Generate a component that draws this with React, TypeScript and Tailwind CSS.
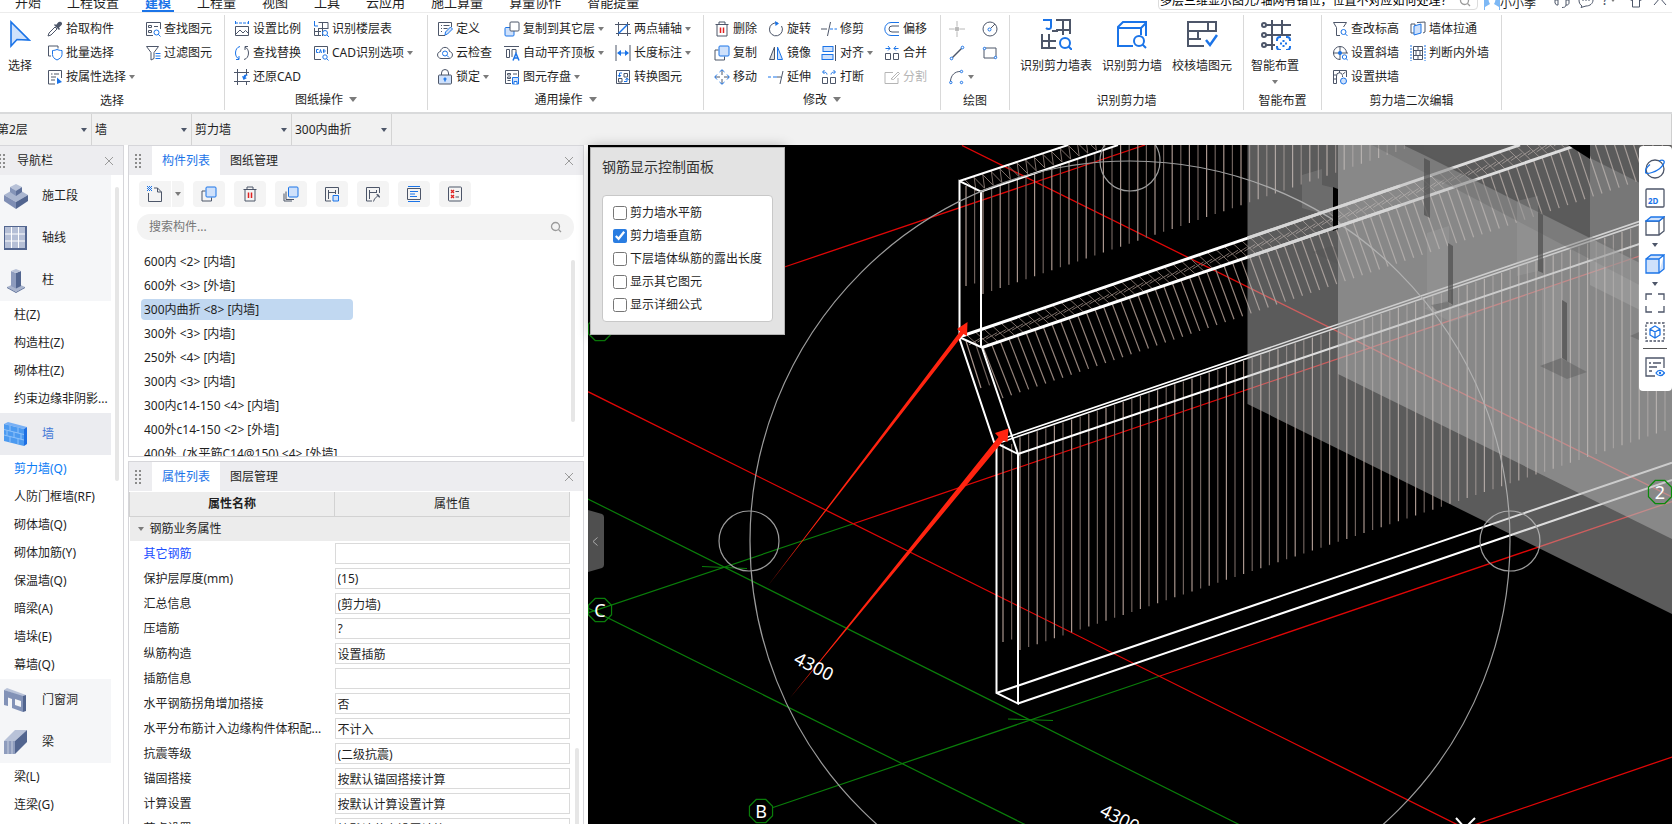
import React, { useState } from "react";

const D = "#4d5669";
const B = "#1b74e8";
const F = "#cfe1fb";

/* ------------------------------------------------------------------ icons */

const art: Record<string, React.ReactNode> = {
  picker: (
    <g>
      <path d="M1 15l1-3 6-6 2 2-6 6z" stroke={D} fill="none" />
      <path d="M7 4l5 5 1-1-1-1.500 2.500-2.500c1-1 .5-2.500-.5-3s-2-.5-2.700.2L9 4 8 3z" fill={D} />
    </g>
  ),
  batch: (
    <g fill="none">
      <path d="M4 11H1.500v-10H11v2.500" stroke={D} />
      <path d="M5.500 5.500c2 0 3-.5 4.500-1 1.500.5 2.500 1 5 1v4c0 2.500-2 4-5 5.500-3-1.500-4.500-3-4.500-5.500z" stroke={B} fill="#fff" />
    </g>
  ),
  attr: (
    <g fill="none">
      <path d="M8 15H1.500V1.500h13V9M4 5h1.500M7 5h5M4 8h5M4 11h4" stroke={D} />
      <path d="M10 8.500v6.500l5-2z" fill={B} />
    </g>
  ),
  find: (
    <g fill="none">
      <path d="M8 14.500H1.500v-13h14V8M3.500 4.500h3v2h-3zM3.500 9.500h3v2h-3zM9 5.500h4" stroke={D} />
      <circle cx="11.500" cy="11.500" r="2.500" stroke={B} />
      <path d="M13.300 13.300L15.500 15.500" stroke={B} />
    </g>
  ),
  filter: (
    <g fill="none">
      <path d="M1.500 1.500h12L9 7.500v6l-3 1.500V7.500z" stroke={D} />
      <path d="M10.500 8.500h5M10.500 11h5M10.500 13.500h5" stroke={B} />
    </g>
  ),
  scale: (
    <g fill="none">
      <path d="M1 2h14M1.500 0v4M14.500 0v4" stroke={B} strokeDasharray="3 1" />
      <path d="M1.500 5.500h13v9h-13zM2 13l4-4 3 3 2.500-2.500 3 3" stroke={D} />
    </g>
  ),
  replace: (
    <g fill="none">
      <path d="M6 1.500C3 2 1.500 5 1.500 8s1.500 5 3.500 6M5 11v3.500H2" stroke={B} />
      <path d="M10 14.500c3-.5 4.500-3.500 4.500-6.500S13 3 11 2M11 5V1.500h3" stroke={D} />
    </g>
  ),
  restore: (
    <g fill="none">
      <path d="M3.500 0v16M0 3.500h15M12.500 0v6M0 12.500h16M12.500 13v3" stroke={D} />
      <path d="M14 6c-3-1-4 0-4.500 1.500L8 7l1.500 4L13 9l-1.500-.5C11.800 7.500 12.500 6.500 14 6z" fill={B} />
    </g>
  ),
  floor: (
    <g fill="none">
      <path d="M1.500 0v5H5" stroke={B} />
      <path d="M5.500 1.500h9.500V8M9.500 1.500V15M1.500 7v7.500H8M1.500 10.500H8M5.500 7.500H15M5.500 7v8" stroke={D} />
      <circle cx="12" cy="12" r="2.500" stroke={B} fill="#fff" />
      <path d="M14 14l2 2" stroke={B} />
    </g>
  ),
  cad: (
    <g fill="none">
      <path d="M8 14.500H1.500v-13h13V9" stroke={D} />
      <path d="M5.500 4.500h-2v3h2M6.500 8l1-3.500 1 3.500M10.500 4.500v3c2 0 2-3 0-3" stroke={B} />
      <circle cx="12" cy="12" r="2.200" stroke={B} fill="#fff" />
      <path d="M13.500 13.500l2 2" stroke={B} />
    </g>
  ),
  define: (
    <g fill="none">
      <path d="M8 14.500H1.500v-13h13V6M4 4.500h1M6.500 4.500h6M4 7.500h1M6.500 7.500h4M4 10.500h1" stroke={D} />
      <path d="M8 14l.5-3 5-5 2 2-5 5z" stroke={B} fill={F} />
    </g>
  ),
  cloud: (
    <g fill="none">
      <path d="M4 13.500C-.5 13-.5 7 3.500 6.500 4 1 12 1 12.500 6.500c4 .5 4 6.500-.5 7z" stroke={D} />
      <circle cx="8" cy="8.500" r="2.500" stroke={B} />
      <path d="M9.800 10.300L12 12.500" stroke={B} />
    </g>
  ),
  lock: (
    <g fill="none">
      <path d="M4.500 6V4a3.500 3.500 0 017 0v2" stroke={D} />
      <rect x="1.500" y="6" width="13" height="9" rx="1" stroke={D} fill={F} />
      <path d="M8 8.500v4M6.500 10h3" stroke={B} strokeWidth="1.500" />
    </g>
  ),
  copyTo: (
    <g fill="none">
      <rect x="1" y="6.500" width="9" height="8.500" rx="1" stroke={B} fill={F} />
      <rect x="6" y="1" width="9" height="9" rx="1" stroke={D} fill="#fff" />
    </g>
  ),
  flat: (
    <g fill="none">
      <path d="M0 1.500h15M2.500 4.500h3v8h-3zM8 12V4.500h4V8" stroke={D} />
      <path d="M9 15.500l3-7 3 7M10 13h4" stroke={B} strokeWidth="1.500" />
    </g>
  ),
  save: (
    <g fill="none">
      <path d="M7 14.500H1.500v-13h13V8M3.500 4.500h3v1.500h-3zM3.500 8h3v1.500h-3zM3.500 11.500h3M9 5h4" stroke={D} />
      <path d="M8.500 8.500h6v6.500h-6z" stroke={B} fill={F} />
      <path d="M10 15v-2.500h3V15" stroke={B} fill="#fff" />
    </g>
  ),
  twoPoint: (
    <g fill="none">
      <path d="M3.500 1v14M12.500 1v14M0 3.500h15M1 12.500h15" stroke={D} />
      <path d="M3.500 12.500l9-9" stroke={B} strokeWidth="1.500" />
    </g>
  ),
  length: (
    <g fill="none">
      <path d="M1 0v16M15 0v16" stroke={D} />
      <path d="M3 8h10" stroke={B} />
      <path d="M6 5L2 8l4 3zM10 5l4 3-4 3z" fill={B} />
    </g>
  ),
  convert: (
    <g fill="none">
      <path d="M1.500 1.500h13v13h-13zM9 4.500h3.500V8H9zM3.500 9.500H7v3.500H3.500z" stroke={D} />
      <path d="M7 4H4.500v3.500M9 12.500h3V9.500M3 6l1.500 2L6 6M10.500 11L12 9l1.500 2" stroke={B} />
    </g>
  ),
  trash: (
    <g fill="none">
      <path d="M1.500 3.500h13M5 3.500V1h6v2.500M3 3.500v11.500h10V3.500" stroke={D} />
      <path d="M6.500 6.500v5.500M9.500 6.500v5.500" stroke="#e02020" strokeWidth="1.500" />
    </g>
  ),
  copy: (
    <g fill="none">
      <path d="M4.500 5H1v10h9.500v-3.500" stroke={D} />
      <rect x="5" y="1" width="10" height="10" rx="1" stroke={B} fill={F} />
    </g>
  ),
  move: (
    <g fill="none" stroke={B}>
      <path d="M8 1v5M8 10v5M1 8h5M10 8h5" stroke={D} />
      <path d="M5.500 3L8 .7 10.500 3M5.500 13L8 15.300 10.500 13M3 5.500L.7 8 3 10.500M13 5.500L15.300 8 13 10.500" />
    </g>
  ),
  rotate: (
    <g fill="none">
      <path d="M10 2.200A6.500 6.500 0 1013.500 5" stroke={D} />
      <path d="M7 0l4 2.500L7.500 5z" fill={B} />
    </g>
  ),
  mirror: (
    <g fill="none">
      <path d="M6.500 2v12.500h-5z" stroke={D} fill="#ddd" />
      <path d="M9.500 2v12.500h5z" stroke={B} fill={F} />
    </g>
  ),
  extend: (
    <g fill="none">
      <path d="M0 8h3M5 8h4" stroke={B} />
      <path d="M9 8h4M15 2l-3 13" stroke={D} />
    </g>
  ),
  trim: (
    <g fill="none">
      <path d="M0 8h6M9.500 1l-3 14" stroke={D} />
      <path d="M9 8h3M13.500 8H16" stroke={B} />
    </g>
  ),
  align: (
    <g fill="none" stroke={B}>
      <rect x="2" y="1.500" width="10" height="5" fill={F} />
      <rect x="1" y="9.500" width="11" height="5" fill={F} />
      <path d="M14.500 0v16" stroke={D} />
    </g>
  ),
  breakup: (
    <g fill="none">
      <path d="M1.500 8.500h5v6h-5zM9.500 8.500h5v6h-5z" stroke={D} />
      <path d="M6 5.500C6 3.500 4 3 2 3M10 5.500C10 3.500 12 3 14 3M3.500 1L1.500 3l2 2M12.500 1l2 2-2 2" stroke={B} />
    </g>
  ),
  offset: (
    <g fill="none">
      <path d="M15 1.500H7a6 6.300 0 000 13h8" stroke={B} />
      <path d="M15 5H8a3 3 0 000 6h7" stroke={D} />
    </g>
  ),
  merge: (
    <g fill="none">
      <path d="M1.500 8.500h5v6h-5zM9.500 8.500h5v6h-5z" stroke={D} />
      <path d="M1.500 3.500H6M10 3.500h4.500M4 1l2 2.500L4 5.500M12 1l-2 2.500 2 2" stroke={B} />
    </g>
  ),
  split: (
    <g fill="none" stroke="#b5b5b5">
      <path d="M9 3.500H1v11h13V9M7 10l7-7 1.500 1.500-6 6z" />
    </g>
  ),
  point: (
    <g stroke="#b8b8b8" fill="none">
      <path d="M8 0v5M8 11v5M0 8h5M11 8h5" />
      <circle cx="8" cy="8" r="2" fill="#b8b8b8" />
    </g>
  ),
  circle: (
    <g fill="none">
      <circle cx="8" cy="8" r="7" stroke={D} />
      <path d="M9 7l4-4" stroke={D} />
      <circle cx="7.500" cy="8.500" r="1.500" stroke={B} />
    </g>
  ),
  line: (
    <g fill="none">
      <path d="M3.500 12.500l9-9" stroke={D} strokeWidth="1.500" />
      <circle cx="2.500" cy="13.500" r="1.300" stroke={B} />
      <circle cx="13.500" cy="2.500" r="1.300" stroke={B} />
    </g>
  ),
  rect: (
    <g fill="none">
      <path d="M2 3h12v10H2z" stroke={D} />
      <circle cx="2.500" cy="3.500" r="1.200" stroke={B} fill="#fff" />
      <circle cx="13.500" cy="12.500" r="1.200" stroke={B} fill="#fff" />
    </g>
  ),
  arc: (
    <g fill="none">
      <path d="M1.500 12C2 6 6 2.500 11 2.500" stroke={D} />
      <circle cx="1.800" cy="13.500" r="1.200" stroke={B} />
      <circle cx="12.500" cy="2.500" r="1.200" stroke={B} />
      <circle cx="12.500" cy="13.500" r="1.200" stroke={B} />
    </g>
  ),
  elevation: (
    <g fill="none">
      <path d="M8 14.500H4.500v-8l-3-5h13l-3 4.500" stroke={D} />
      <circle cx="11.500" cy="11" r="2.500" stroke={B} />
      <path d="M13.500 13l2 2" stroke={B} />
    </g>
  ),
  slant: (
    <g fill="none">
      <path d="M8 14.500A6.500 6.500 0 118 1.500a6.500 6.500 0 016.500 6.500M8 1v14M1 8h15" stroke={D} />
      <circle cx="8" cy="8" r="2" fill={B} />
      <circle cx="12.500" cy="12" r="2.200" stroke={B} fill="#fff" />
      <path d="M14 13.500l2 2" stroke={B} />
    </g>
  ),
  arch: (
    <g fill="none">
      <path d="M1.500 14.500v-13h13V8M4.500 14.500V7a3 3 0 016-.5V8M1.500 14.500h3M1.500 6h3M1.500 10h3M7.500 1.500v2.500M11 5l2.500-2" stroke={D} />
      <circle cx="11.500" cy="12" r="3" stroke={B} fill={F} />
    </g>
  ),
  through: (
    <g fill="none">
      <path d="M1 3h4v9H1zM7 1.500l8-.5v10l-2 1" stroke={D} />
      <path d="M4 5l7-2v9l-7 2z" stroke={B} fill={F} />
    </g>
  ),
  judge: (
    <g fill="none">
      <path d="M1 0v16M15 0v16" stroke={B} strokeDasharray="2 1" />
      <path d="M3.500 1.500h9v13h-9zM3.500 5.500h9M3.500 10.500h9M8 1.500v4M6 5.500v5M10 5.500v5M8 10.500v4" stroke={D} />
    </g>
  ),
  newDoc: (
    <g fill="none">
      <path d="M1.500 7v8.500h13V6l-4-4H7M10.500 2v4h4" stroke={D} />
      <path d="M0 .5h5M0 2.500h5M0 4.500h5" stroke={B} strokeDasharray="1 1" />
      <path d="M1 1.500h4M1 3.500h4" stroke={B} strokeDasharray="1 1" />
    </g>
  ),
  layers: (
    <g fill="none">
      <path d="M3 5.500v8h8M1 7.500V15h8" stroke={D} />
      <rect x="5.500" y="1" width="9.500" height="10" rx="1" stroke={B} fill={F} />
    </g>
  ),
  saveComp: (
    <g fill="none">
      <path d="M7 15H1.500V1.500h13V8M4.500 4v9M4.500 6.500h7M11.500 4v4" stroke={D} />
      <path d="M9 9.500h5.500V15H9z" stroke={B} fill={F} />
    </g>
  ),
  editComp: (
    <g fill="none">
      <path d="M7 15H1.500V1.500h13V7M4.500 4v9M4.500 6.500h7M11.500 4v3" stroke={D} />
      <path d="M8.500 15.500l1-2.500 3-3" stroke={D} />
      <path d="M11 8.500l3.500 3.500.5-1.500L13 8z" fill={D} />
    </g>
  ),
  text: (
    <g fill="none">
      <path d="M2 .5h12M2 15.500h12" stroke={B} />
      <path d="M1.500 2.500h13v11h-13z" stroke={D} />
      <path d="M4 5.500h8M4 8h5M4 10.500h7" stroke={B} />
    </g>
  ),
  check: (
    <g fill="none">
      <rect x="1.500" y="1" width="13" height="14" rx="1" stroke={D} />
      <path d="M4 4l3 3M7 4L4 7M4 9l3 3M7 9l-3 3" stroke="#e02020" strokeWidth="1.300" />
      <path d="M8.500 5.500H12M8.500 11H12" stroke={D} />
    </g>
  ),
};

function Icon({ name, className = "h-4 w-4" }: { name: string; className?: string }) {
  return (
    <svg viewBox="0 0 16 16" className={`${className} shrink-0`} aria-hidden="true">
      {art[name]}
    </svg>
  );
}

function Caret({ className = "text-[#7b7b7b]" }: { className?: string }) {
  return (
    <svg viewBox="0 0 6 4" className={`h-1 w-1.5 shrink-0 ${className}`} aria-hidden="true">
      <path d="M0 0h6L3 4z" fill="currentColor" />
    </svg>
  );
}

function CloseButton({ label }: { label: string }) {
  return (
    <button type="button" aria-label={label} className="flex h-4 w-4 items-center justify-center">
      <svg viewBox="0 0 10 10" className="h-2.5 w-2.5">
        <path d="M1 1l8 8M9 1l-8 8" stroke="#9a9a9a" fill="none" />
      </svg>
    </button>
  );
}

function Grip() {
  return (
    <svg viewBox="0 0 6 16" className="h-4 w-1.5 shrink-0" aria-hidden="true">
      {[1, 5, 9, 13].map((y) => (
        <path key={y} d={`M0 ${y}h2v2h-2zM4 ${y}h2v2h-2z`} fill="#8b8b8b" />
      ))}
    </svg>
  );
}

function SearchGlyph() {
  return (
    <svg viewBox="0 0 12 12" className="h-3 w-3 shrink-0" aria-hidden="true">
      <circle cx="5.500" cy="5.500" r="4" stroke="#9b9b9b" fill="none" strokeWidth="1.300" />
      <path d="M8.500 8.500L11 11" stroke="#9b9b9b" strokeWidth="1.300" />
    </svg>
  );
}

/* ----------------------------------------------------------------- ribbon */

type Cmd = { icon: string; label?: string; caret?: boolean; off?: boolean; name?: string };

function Column({ items, className = "" }: { items: Cmd[]; className?: string }) {
  return (
    <div className={`flex flex-col ${className}`}>
      {items.map((c) => (
        <button
          key={c.icon}
          type="button"
          disabled={c.off}
          aria-label={c.name}
          className="flex h-6 items-center gap-[3px] whitespace-nowrap disabled:text-[#b5b5b5]"
        >
          <Icon name={c.icon} />
          {c.label && <span>{c.label}</span>}
          {c.caret && <Caret />}
        </button>
      ))}
    </div>
  );
}

function Big({ label, caret, children }: { label: string; caret?: boolean; children: React.ReactNode }) {
  return (
    <button type="button" className="flex flex-col items-center self-start whitespace-nowrap pt-px">
      <svg viewBox="0 0 32 32" className="h-8 w-8" fill="none" strokeWidth="2" aria-hidden="true">
        {children}
      </svg>
      <span className="mt-2 leading-4">{label}</span>
      {caret && <Caret className="mt-1.5 text-[#7b7b7b]" />}
    </button>
  );
}

function Group({ title, caret, className, children }: { title: string; caret?: boolean; className: string; children: React.ReactNode }) {
  return (
    <section className="flex h-[95px] shrink-0 flex-col border-r border-[#d9d9d9] pt-0.5">
      <div className={`flex h-[72px] ${className}`}>{children}</div>
      <div className={caret ? "flex flex-1 items-center justify-center gap-1.5" : "flex flex-1 items-center justify-center gap-1.5 pt-[3px]"}>
        <span>{title}</span>
        {caret && (
          <svg viewBox="0 0 8 5" className="h-[5px] w-2" aria-hidden="true">
            <path d="M0 0h8L4 5z" fill="#7b7b7b" />
          </svg>
        )}
      </div>
    </section>
  );
}

const menus = ["开始", "工程设置", "建模", "工程量", "视图", "工具", "云应用", "施工算量", "算量协作", "智能提量"];

function TopBar() {
  return (
    <header className="flex h-[13px] shrink-0 items-end justify-between overflow-hidden border-b border-[#ececec]">
      <nav className="flex items-end gap-5 pl-3 text-[13px]">
        {menus.map((m) => (
          <a
            key={m}
            href="#"
            className={
              m === "建模"
                ? "border-b-2 border-[#1b74e8] px-[3px] font-bold leading-4 text-[#1b74e8]"
                : "border-b-2 border-transparent px-[3px] leading-4"
            }
          >
            {m}
          </a>
        ))}
      </nav>
      <div className="flex items-end pr-1">
        <label className="mb-0.5 mr-1.5 flex h-[18px] w-[320px] items-center rounded-sm border border-[#dcdcdc] bg-white pl-px">
          <input
            aria-label="搜索帮助"
            defaultValue="多层三维显示图元/轴网有错位，位置不对应如何处理？"
            className="min-w-0 flex-1 bg-transparent text-[12px] text-black outline-none"
          />
          <span className="pr-1.5"><SearchGlyph /></span>
        </label>
        <svg viewBox="0 0 16 16" className="mb-0.5 h-4 w-4" aria-hidden="true">
          <path d="M0 0h16v16H0z" fill="#7db8f5" />
          <path d="M8 2c3 0 4 3 3 6l-1 2 5 3v3H1v-3l5-3-1-2C4 5 5 2 8 2z" fill="#fff" />
        </svg>
        <span className="w-[54px] text-[12px] leading-4">小小季</span>
        <div className="mb-1 flex items-end gap-2 text-[#4d5669]">
          <button type="button" aria-label="客服">
            <svg viewBox="0 0 16 16" className="block h-4 w-4" fill="none" stroke="currentColor">
              <path d="M1.500 8a6.500 6.500 0 0113 0M1 8h3v5H2.500L1 11zM15 8h-3v5h1c1 0 2-1 2-2zM12 13c0 2-2 2.500-4 2.500" />
            </svg>
          </button>
          <button type="button" aria-label="消息">
            <svg viewBox="0 0 16 16" className="block h-4 w-4" fill="none" stroke="currentColor">
              <path d="M4 14l-1 1.500L8 14c4 0 7-2.500 7-6s-3-6-7-6-7 2.500-7 6c0 3 1 4.500 3 6zM4.500 8.500h1M7.500 8.500h1M10.500 8.500h1" />
            </svg>
          </button>
          <button type="button" aria-label="帮助" className="flex items-center gap-0.5 text-[14px] leading-4">
            <span>?</span>
            <Caret />
          </button>
          <button type="button" aria-label="皮肤" className="ml-1">
            <svg viewBox="0 0 16 16" className="block h-4 w-4" fill="none" stroke="currentColor">
              <path d="M5 2L1 5.500l2 3 1.500-1V15h7V7.500l1.500 1 2-3L11 2C10 4 6 4 5 2z" />
            </svg>
          </button>
          <button type="button" aria-label="收起功能区">
            <svg viewBox="0 0 16 16" className="block h-4 w-4" fill="none" stroke="currentColor">
              <path d="M2 13l6-7 6 7" />
            </svg>
          </button>
        </div>
      </div>
    </header>
  );
}

function Ribbon() {
  return (
    <div className="flex h-[101px] shrink-0 items-start overflow-hidden border-b-2 border-[#d9dadb] pt-0.5">
      <Group title="选择" className="w-[224px]">
        <button type="button" className="flex w-10 flex-col items-center self-start pt-[3px]">
          <svg viewBox="0 0 22 28" className="h-7 w-[22px]" aria-hidden="true">
            <path d="M2 2v24l6-6.500 12 .5z" fill={F} stroke={B} strokeWidth="1.600" />
          </svg>
          <span className="mt-2.5 leading-4">选择</span>
        </button>
        <Column
          className="ml-[7px] w-[98px]"
          items={[
            { icon: "picker", label: "拾取构件" },
            { icon: "batch", label: "批量选择" },
            { icon: "attr", label: "按属性选择", caret: true },
          ]}
        />
        <Column items={[{ icon: "find", label: "查找图元" }, { icon: "filter", label: "过滤图元" }]} />
      </Group>
      <Group title="图纸操作" caret className="w-[202px] pl-[9px]">
        <Column
          className="w-[79px]"
          items={[{ icon: "scale", label: "设置比例" }, { icon: "replace", label: "查找替换" }, { icon: "restore", label: "还原CAD" }]}
        />
        <Column items={[{ icon: "floor", label: "识别楼层表" }, { icon: "cad", label: "CAD识别选项", caret: true }]} />
      </Group>
      <Group title="通用操作" caret className="w-[275px] pl-[9px]">
        <Column
          className="w-[67px]"
          items={[{ icon: "define", label: "定义" }, { icon: "cloud", label: "云检查" }, { icon: "lock", label: "锁定", caret: true }]}
        />
        <Column
          className="w-[111px]"
          items={[
            { icon: "copyTo", label: "复制到其它层", caret: true },
            { icon: "flat", label: "自动平齐顶板", caret: true },
            { icon: "save", label: "图元存盘", caret: true },
          ]}
        />
        <Column
          items={[
            { icon: "twoPoint", label: "两点辅轴", caret: true },
            { icon: "length", label: "长度标注", caret: true },
            { icon: "convert", label: "转换图元" },
          ]}
        />
      </Group>
      <Group title="修改" caret className="w-[236px] pl-2.5">
        <Column className="w-[54px]" items={[{ icon: "trash", label: "删除" }, { icon: "copy", label: "复制" }, { icon: "move", label: "移动" }]} />
        <Column className="w-[53px]" items={[{ icon: "rotate", label: "旋转" }, { icon: "mirror", label: "镜像" }, { icon: "extend", label: "延伸" }]} />
        <Column className="w-[63px]" items={[{ icon: "trim", label: "修剪" }, { icon: "align", label: "对齐", caret: true }, { icon: "breakup", label: "打断" }]} />
        <Column items={[{ icon: "offset", label: "偏移" }, { icon: "merge", label: "合并" }, { icon: "split", label: "分割", off: true }]} />
      </Group>
      <Group title="绘图" className="w-[68px] pl-2">
        <Column className="w-[33px]" items={[{ icon: "point", name: "点", off: true }, { icon: "line", name: "直线" }, { icon: "arc", name: "弧", caret: true }]} />
        <Column items={[{ icon: "circle", name: "圆" }, { icon: "rect", name: "矩形" }]} />
      </Group>
      <Group title="识别剪力墙" className="w-[233px] gap-2.5 pl-2.5">
        <Big label="识别剪力墙表">
          <path d="M3 2h8v7c0 2-3 3-5 1" stroke={B} />
          <path d="M16 2h14v14M23 2v15M16 12h14M2 16v14h14M2 23h14M9 16v14M12 13h6" stroke={D} />
          <circle cx="25" cy="25" r="5" stroke={B} fill="#fff" />
          <path d="M28.500 28.500L32 32" stroke={B} />
        </Big>
        <Big label="识别剪力墙">
          <path d="M17 28H2V9l5-5h23v14M2 10h23v7M25 10l5-5" stroke={B} />
          <circle cx="23" cy="23" r="5" stroke={B} fill="#fff" />
          <path d="M26.500 26.500L30 30" stroke={B} />
        </Big>
        <Big label="校核墙图元">
          <path d="M18 28H2V4h28v9H2M22 4v9M12 13v8M2 21h13" stroke={D} />
          <path d="M20 22l4 5 7-10" stroke={B} strokeWidth="2.500" />
        </Big>
      </Group>
      <Group title="智能布置" className="w-[77px] pl-[7px]">
        <Big label="智能布置" caret>
          <path d="M6 7h26M6 17h26M6 27h10M13 2v30M23 2v14" stroke={D} />
          <path d="M5 5a2 2 0 100 4 2 2 0 000-4zM5 15a2 2 0 100 4 2 2 0 000-4zM5 25a2 2 0 100 4 2 2 0 000-4z" stroke={D} fill="#fff" />
          <path d="M18 23v-1c0-2 1-3 3-3h1M27 19h1c2 0 3 1 3 3v1M31 28v1c0 2-1 3-3 3h-1M22 32h-1c-2 0-3-1-3-3v-1M24.500 22v2M24.500 27v2M21 25.500h2M26 25.500h2" stroke={B} />
        </Big>
      </Group>
      <Group title="剪力墙二次编辑" className="w-[179px] pl-2.5">
        <Column className="w-[78px]" items={[{ icon: "elevation", label: "查改标高" }, { icon: "slant", label: "设置斜墙" }, { icon: "arch", label: "设置拱墙" }]} />
        <Column items={[{ icon: "through", label: "墙体拉通" }, { icon: "judge", label: "判断内外墙" }]} />
      </Group>
    </div>
  );
}

function ContextBar() {
  const combos = [
    { name: "楼层", value: "第2层", box: "w-[92px]", text: "-ml-[3px]" },
    { name: "构件类别", value: "墙", box: "w-[100px]", text: "pl-[3px]" },
    { name: "构件类型", value: "剪力墙", box: "w-[100px]", text: "pl-[3px]" },
    { name: "构件", value: "300内曲折", box: "w-[100px]", text: "pl-[3px]" },
  ];
  return (
    <div className="flex h-[31px] shrink-0 border-r border-[#cfcfcf] bg-[#f1f1f1]">
      {combos.map((c) => (
        <label key={c.name} className={`${c.box} flex items-center border-r border-[#d4d4d4] pr-1`}>
          <select aria-label={c.name} className={`${c.text} min-w-0 flex-1 appearance-none bg-transparent outline-none`}>
            <option>{c.value}</option>
          </select>
          <Caret className="text-[#4d5669]" />
        </label>
      ))}
    </div>
  );
}

/* -------------------------------------------------------------- navigator */

const navArt: Record<string, React.ReactNode> = {
  施工段: (
    <g>
      <path d="M0 11l12-7 12 7-12 7z" fill="#aab6d0" />
      <path d="M0 11v6l12 8v-7z" fill="#7f8eb4" />
      <path d="M24 11v6l-12 8v-7z" fill="#52658f" />
      <path d="M6 3l6-3 6 3-6 4z" fill="#b8c2d8" />
      <path d="M6 3v5l6 4V7z" fill="#8494b8" />
      <path d="M18 3v5l-6 4V7z" fill="#5d6f99" />
    </g>
  ),
  轴线: (
    <g>
      <path d="M0 0h23v24H0z" fill="#52658f" />
      <path d="M1 1h20v21H1z" fill="#b5bfd6" />
      <path d="M7.500 1v21M14.500 1v21M1 8h20M1 15h20" stroke="#fff" />
    </g>
  ),
  柱: (
    <g>
      <path d="M3 19l9-4 9 4-9 5z" fill="#a9b4cd" />
      <path d="M3 19v1l9 5v-1zM21 19v1l-9 5v-1z" fill="#5d6f99" />
      <path d="M7 3v15l5 2.500V5z" fill="#8d9bbd" />
      <path d="M17 3v15l-5 2.500V5z" fill="#52658f" />
      <path d="M7 3l5-2 5 2-5 2z" fill="#b8c2d8" />
    </g>
  ),
  墙: (
    <g>
      <path d="M0 2l4-2 19 5-3 2z" fill="#78b0f5" />
      <path d="M0 2l20 5v17L0 19z" fill="#4c9af0" />
      <path d="M20 7l3-2v17l-3 2z" fill="#1d6fe3" />
      <path d="M0 7.500l20 5M0 13l20 5M6 4v5M14 6v5M3 8.500v5M10 10v5.500M17 12v5M6 15v5M14 17v5" stroke="#8fc2fa" fill="none" />
    </g>
  ),
  门窗洞: (
    <g>
      <path d="M0 2l3-2 19 7-3 2z" fill="#b8c2d8" />
      <path d="M0 2l19 6v16l-11-4v-9l-4-1.500V18l-4-1z" fill="#8292b7" />
      <path d="M19 8l3-1v16l-3 1z" fill="#52658f" />
      <path d="M11 11l6 2v6l-6-2z" fill="#f4f5f7" />
    </g>
  ),
  梁: (
    <g>
      <path d="M0 11L11 0h12L11 11z" fill="#b8c2d8" />
      <path d="M0 11h11v13H0z" fill="#8e9cbd" />
      <path d="M11 11L23 0v12L11 24z" fill="#52658f" />
      <path d="M4 11v13M8 11v13" stroke="#c6cede" />
    </g>
  ),
};

function NavHead({ name, active }: { name: string; active?: boolean }) {
  return (
    <button
      type="button"
      className={
        active
          ? "flex h-[42px] w-full items-center gap-3.5 bg-[#ebecf0] pl-1 text-[#4277d6]"
          : "flex h-[42px] w-full items-center gap-3.5 bg-[#f5f6f8] pl-1"
      }
    >
      <svg viewBox="0 0 24 25" className="h-[25px] w-6 shrink-0" aria-hidden="true">
        {navArt[name]}
      </svg>
      {name}
    </button>
  );
}

function NavItem({ name, active }: { name: string; active?: boolean }) {
  return (
    <a
      href="#"
      className={
        active
          ? "block h-7 whitespace-nowrap pl-3.5 leading-7 text-[#0b7bf5]"
          : "block h-7 whitespace-nowrap pl-3.5 leading-7"
      }
    >
      {name}
    </a>
  );
}

function Navigator() {
  return (
    <aside className="flex w-[124px] shrink-0 flex-col overflow-hidden border-r border-t border-[#d6d6da]">
      <div className="flex h-[29px] shrink-0 items-center bg-[#ededf0] pr-1.5">
        <span className="-ml-px"><Grip /></span>
        <h2 className="ml-3 flex-1">导航栏</h2>
        <CloseButton label="关闭导航栏" />
      </div>
      <div className="flex min-h-0 flex-1">
        <nav className="w-[111px] shrink-0">
          <NavHead name="施工段" />
          <NavHead name="轴线" />
          <NavHead name="柱" />
          {["柱(Z)", "构造柱(Z)", "砌体柱(Z)", "约束边缘非阴影..."].map((n) => (
            <NavItem key={n} name={n} />
          ))}
          <NavHead name="墙" active />
          {["剪力墙(Q)", "人防门框墙(RF)", "砌体墙(Q)", "砌体加筋(Y)", "保温墙(Q)", "暗梁(A)", "墙垛(E)", "幕墙(Q)"].map((n, i) => (
            <NavItem key={n} name={n} active={i === 0} />
          ))}
          <NavHead name="门窗洞" />
          <NavHead name="梁" />
          {["梁(L)", "连梁(G)"].map((n) => (
            <NavItem key={n} name={n} />
          ))}
        </nav>
        <div className="ml-1 mt-3 h-[294px] w-1 rounded-full bg-[#e6e6e6]" />
      </div>
    </aside>
  );
}

/* ----------------------------------------------------------------- panels */

function PanelTabs({ tabs, close }: { tabs: string[]; close: string }) {
  return (
    <div className="flex h-[29px] shrink-0 items-center bg-[#ededf0] pl-1.5 pr-1.5">
      <Grip />
      <div className="ml-[11px] flex h-full flex-1">
        {tabs.map((t, i) => (
          <button key={t} type="button" className={i === 0 ? "h-full bg-white px-2.5 text-[#1b74e8]" : "h-full px-2.5"}>
            {t}
          </button>
        ))}
      </div>
      <CloseButton label={close} />
    </div>
  );
}

const components = [
  "600内 <2> [内墙]",
  "600外 <3> [外墙]",
  "300内曲折 <8> [内墙]",
  "300外 <3> [内墙]",
  "250外 <4> [内墙]",
  "300内 <3> [内墙]",
  "300内c14-150 <4> [内墙]",
  "400外c14-150 <2> [外墙]",
  "400外  (水平筋C14@150) <4> [外墙]",
];

const tools = [
  ["copy", "复制"],
  ["trash", "删除"],
  ["layers", "层间复制"],
  ["saveComp", "存盘"],
  ["editComp", "提取"],
  ["text", "排序"],
  ["check", "未使用构件"],
];

function ComponentPanel() {
  const [selected, setSelected] = useState(2);
  return (
    <section className="flex h-[312px] shrink-0 flex-col overflow-hidden border border-[#d6d6da]">
      <PanelTabs tabs={["构件列表", "图纸管理"]} close="关闭构件列表" />
      <div className="mt-1.5 flex shrink-0 gap-[9px] pl-2.5">
        <div className="flex gap-px">
          <button type="button" aria-label="新建" className="flex h-[26px] w-8 items-center justify-center rounded-l-sm bg-[#f4f4f4]">
            <Icon name="newDoc" />
          </button>
          <button type="button" aria-label="新建选项" className="flex h-[26px] w-3 items-center justify-center rounded-r-sm bg-[#f4f4f4]">
            <Caret />
          </button>
        </div>
        {tools.map(([icon, name]) => (
          <button key={icon} type="button" aria-label={name} className="flex h-[26px] w-8 items-center justify-center rounded-sm bg-[#f4f4f4]">
            <Icon name={icon} />
          </button>
        ))}
      </div>
      <label className="ml-2 mr-[9px] mt-[7px] flex h-[26px] shrink-0 items-center rounded-full bg-[#f3f3f3] pl-3 pr-3">
        <input aria-label="搜索构件" placeholder="搜索构件..." className="min-w-0 flex-1 bg-transparent outline-none placeholder:text-[#777]" />
        <SearchGlyph />
      </label>
      <div className="mt-2.5 flex min-h-0 flex-1 overflow-hidden">
        <ul className="flex-1 pl-3">
          {components.map((c, i) => (
            <li key={c} className="h-6 py-px">
              <button
                type="button"
                onClick={() => setSelected(i)}
                className={
                  i === selected
                    ? "block h-[21px] w-[212px] whitespace-pre rounded-sm bg-[#c1d8f1] pl-[3px] text-left"
                    : "block h-[21px] w-[212px] whitespace-pre pl-[3px] text-left"
                }
              >
                {c}
              </button>
            </li>
          ))}
        </ul>
        <div className="mr-2 mt-2.5 h-[162px] w-1 rounded-full bg-[#e6e6e6]" />
      </div>
    </section>
  );
}

const properties: [string, string][] = [
  ["其它钢筋", ""],
  ["保护层厚度(mm)", "(15)"],
  ["汇总信息", "(剪力墙)"],
  ["压墙筋", "?"],
  ["纵筋构造", "设置插筋"],
  ["插筋信息", ""],
  ["水平钢筋拐角增加搭接", "否"],
  ["水平分布筋计入边缘构件体积配...", "不计入"],
  ["抗震等级", "(二级抗震)"],
  ["锚固搭接", "按默认锚固搭接计算"],
  ["计算设置", "按默认计算设置计算"],
  ["节点设置", "按默认节点设置计算"],
];

function PropertyPanel() {
  return (
    <section className="mt-1 flex min-h-0 flex-1 flex-col overflow-hidden border border-b-0 border-[#d6d6da]">
      <PanelTabs tabs={["属性列表", "图层管理"]} close="关闭属性列表" />
      <div className="mt-px flex min-h-0 flex-1 overflow-hidden">
        <div className="flex-1">
          <table className="w-full table-fixed border-collapse">
            <thead>
              <tr className="h-6 bg-[#ededed]">
                <th scope="col" className="w-[205px] border border-t-0 border-[#d2d2d2] font-bold">属性名称</th>
                <th scope="col" className="border border-t-0 border-[#d2d2d2] font-normal">属性值</th>
              </tr>
            </thead>
            <tbody>
              <tr className="h-[25px] bg-[#ececec]">
                <td colSpan={2} className="pl-2">
                  <button type="button" className="flex items-center gap-1.5">
                    <Caret />
                    钢筋业务属性
                  </button>
                </td>
              </tr>
              {properties.map(([name, value], i) => (
                <tr key={name} className="h-[25px]">
                  <td className={i === 0 ? "truncate p-0 pl-3.5 text-[#1a4dff]" : "truncate p-0 pl-3.5"}>
                    <label htmlFor={`prop-${i}`}>{name}</label>
                  </td>
                  <td className="p-0">
                    <input id={`prop-${i}`} defaultValue={value} className="block h-[21px] w-full border border-[#dadada] bg-white px-0.5 outline-none" />
                  </td>
                </tr>
              ))}
            </tbody>
          </table>
        </div>
        <div className="flex w-[13px] shrink-0 justify-center">
          <div className="mt-64 w-1 rounded-t-full bg-[#e6e6e6]" />
        </div>
      </div>
    </section>
  );
}

/* --------------------------------------------------------------- 3D scene */

const PITCH = 8.6;
const steps = (from: number, to: number) =>
  Array.from({ length: Math.floor((to - from) / PITCH) + 1 }, (_, i) => from + i * PITCH);
const tone = (i: number) => (i % 2 ? "#6e615c" : "#a8958d");

const upperTop = (x: number) => 181 - 0.335 * (x - 959.500);
const upperFront = (x: number) => 191.500 - 0.34 * (x - 981);
const midTop = (x: number) => 336.700 - 0.342 * (x - 959);
const midFront = (x: number) => 347.300 - 0.34 * (x - 982.500);
const lowTop = (x: number) => 443 - 0.341 * (x - 994);
const lowFront = (x: number) => 454 - 0.338 * (x - 1018);

function octagon(cx: number, cy: number, r: number) {
  return Array.from({ length: 8 }, (_, i) => {
    const a = ((i + 0.5) * Math.PI) / 4;
    return `${cx + r * Math.cos(a)},${cy + r * Math.sin(a)}`;
  }).join(" ");
}

function Scene() {
  return (
    <svg viewBox="588 145 1084 679" preserveAspectRatio="xMinYMin slice" className="absolute inset-0 h-full w-full" role="img" aria-label="三维钢筋视图">
      <g fill="none" stroke="#0a7d0a" strokeWidth="1.200">
        <path d="M588 499L1240 825M588 608L1026 825M588 613L854 523.500M773 807.500L1160 676" />
        <path d="M702 566.500L747 568.500M1008 719L1053 720.500" />
        <polygon points={octagon(600, 329, 12.500)} />
        <polygon points={octagon(600, 610, 12.500)} />
        <polygon points={octagon(761, 811, 12.500)} />
      </g>
      <g fill="none" stroke="#e00606" strokeWidth="1.300">
        <path d="M962 145.500L1672 497M780 268.500L1145 145M588 391.700L1458 825M854 523.500L1672 245M1160 676L1672 501.500M1474 825L1672 757" />
      </g>

      <g fill="none" strokeWidth="1.200">
        {steps(966, 976).map((x, i) => (
          <path key={`a${i}`} d={`M${x} ${186 + (x - 966) * 0.3}V${286 - (x - 966) * 0.3}`} stroke={tone(i)} />
        ))}
        {steps(983, 1412).map((x, i) => (
          <path key={`b${i}`} d={`M${x} ${upperFront(x)}V${294 - 0.344 * (x - 983)}`} stroke={tone(i)} />
        ))}
        {steps(966, 1110).map((x, i) => (
          <path key={`c${i}`} d={`M${x - 2} ${upperTop(x)}L${x + 10} ${upperFront(x + 10) - 2}L${x + 8} ${upperTop(x + 8)}`} stroke="#7d6f69" strokeWidth="1" />
        ))}
        {steps(966, 976).map((x, i) => (
          <path key={`d${i}`} d={`M${x} 341L${x + 15} ${388 - (x - 966) * 0.3}`} stroke={tone(i)} />
        ))}
        {steps(983, 1665).map((x, i) => (
          <path key={`e${i}`} d={`M${x} ${midFront(x)}l${20 - (x - 983) * 0.005} 51`} stroke="#94837b" />
        ))}
        {steps(966, 1560).map((x, i) => (
          <path key={`f${i}`} d={`M${x} ${midTop(x)}L${x + 15} ${midFront(x + 15)}M${x + 3} ${midFront(x + 3) - 7}L${x + 14} ${midTop(x + 14) + 9}`} stroke="#7d6f69" strokeWidth="1" />
        ))}
        {steps(1003, 1012).map((x, i) => (
          <path key={`g${i}`} d={`M${x} 444V${642 - (x - 1003) * 0.3}`} stroke={tone(i)} />
        ))}
        {steps(1020, 1672).map((x, i) => (
          <path key={`h${i}`} d={`M${x} ${lowTop(x) + 3}V${650 - 0.34 * (x - 1020)}`} stroke={tone(i)} />
        ))}
      </g>

      <g fill="none" stroke="#fff" strokeWidth="2">
        <path d={`M959.500 337V181L981 191.500V347M959.500 181L1068 145M981 191.500L1118 145`} />
        <path d={`M959 337L1520 ${midTop(1520)}M982 347.500L1580 ${midFront(1580)}`} strokeWidth="3" />
        <path d="M959 337L982 347.500L1018 454L994 442Z" />
        <path d={`M996 441L1672 ${lowTop(1672) - 1.5}M996 444L1672 ${lowTop(1672) + 1.5}`} strokeWidth="1.600" />
        <path d={`M1018 454L1672 ${lowFront(1672)}M996.500 443V693L1018 703.500V454`} />
        <path d="M996.500 693L1672 462.700M1018 703.500L1672 480" />
      </g>

      <g fill="none" stroke="#9c9c9c" strokeWidth="1.200">
        <circle cx="1130" cy="541" r="380" />
        <circle cx="749" cy="541" r="30" />
        <circle cx="1510" cy="541" r="30" />
        <circle cx="1130" cy="161" r="30" />
      </g>

      <g fill="#bababa">
        <path d="M1247.500 145H1580L1590 159V145H1672V614L1247.500 404Z" fillOpacity=".49" />
        <path d="M1338 145H1403L1424 155L1672 279V539L1338 374Z" fillOpacity=".48" />
        <path d="M1372 145H1424V153L1672 277V302Z" fill="#5a5a5a" fillOpacity=".28" />
        <path d="M1590 158L1672 199V326L1590 285Z" fillOpacity=".3" />
      </g>
      <path d="M1568 145H1590V159Z" fill="#000" />
      <g fill="#b4b4b4" fillOpacity=".2">
        <path d="M1302 175L1322 169V185L1338 189V218L1302 208Z" />
        <path d="M1427 233L1449 226V300L1427 308Z" />
        <path d="M1517 201L1538 196V271L1517 276Z" />
        <path d="M1542 289L1563 283V358L1542 365Z" />
        <path d="M1424 308L1448 302L1473 315L1451 322Z" />
      </g>
      <g fill="#4e4e4e" fillOpacity=".7">
        <path d="M1424 158L1430 161V218L1424 215Z" />
        <path d="M1448 243L1453 246V305L1448 302Z" />
        <path d="M1538 212L1543 215V273L1538 271Z" />
        <path d="M1562 300L1567 303V361L1562 358Z" />
      </g>
      <g fill="#555" fillOpacity=".4">
        <path d="M1540 366L1561 358L1587 372L1567 379Z" />
        <path d="M1312 252L1332 246L1338 249V264Z" />
        <path d="M1431 305L1448 302L1453 306L1437 311Z" />
        <path d="M1630 336L1639 332V340Z" />
      </g>
      <path d="M1333 187L1338 189V229L1333 231Z" fill="#000" />
      <path d={`M1247.500 ${midTop(1247.500)}L1400 ${midTop(1400)}M1247.500 ${midFront(1247.500)}L1400 ${midFront(1400)}`} stroke="#d6d6d6" strokeWidth="3" />

      <g fill="#ff2410">
        <path d="M767 587L960 331.500L957 329L967.500 322L967 336L963.500 334Z" />
        <path d="M790 698L998.500 437L995 433L1008.500 428.500L1007.500 442L1003.500 440.500Z" />
      </g>

      <g fill="#fff" fontFamily="'Noto Sans', 'Noto Sans CJK SC', sans-serif" fontSize="18" textAnchor="middle">
        <text x="600" y="617">C</text>
        <text x="761" y="818">B</text>
        <polygon points={octagon(1660, 492, 12.500)} fill="none" stroke="#0a8a0a" strokeWidth="1.200" />
        <text x="1660" y="499">2</text>
        <text transform="translate(811 672) rotate(27)">4300</text>
        <text transform="translate(1117 824) rotate(27)">4300</text>
      </g>
      <path d="M1456 818L1465 828L1475 818" stroke="#fff" strokeWidth="2" fill="none" />
    </svg>
  );
}

function RebarPanel() {
  const options = ["剪力墙水平筋", "剪力墙垂直筋", "下层墙体纵筋的露出长度", "显示其它图元", "显示详细公式"];
  return (
    <section className="absolute left-0.5 top-0.5 w-[195px] border border-[#b4b4b4] bg-[#e3e3e3] px-[11px] pb-3 shadow-[0_0_12px_rgba(0,0,0,0.3)]">
      <h2 className="py-[7px] text-[14px] leading-6 text-[#333]">钢筋显示控制面板</h2>
      <div className="mt-[9px] rounded-sm border border-[#c8c8c8] bg-white py-[5px] pl-2.5">
        {options.map((o, i) => (
          <label key={o} className="flex h-[23px] items-center gap-[3px] whitespace-nowrap">
            <input type="checkbox" defaultChecked={i === 1} className="h-3.5 w-3.5 accent-[#2a7de1]" />
            {o}
          </label>
        ))}
      </div>
    </section>
  );
}

function ViewTool({ name, className, children }: { name: string; className: string; children: React.ReactNode }) {
  return (
    <button type="button" aria-label={name} className={`flex w-full items-center justify-center ${className}`}>
      <svg viewBox="0 0 20 20" className="h-5 w-5" fill="none" strokeWidth="1.300">
        {children}
      </svg>
    </button>
  );
}

function ViewBar() {
  return (
    <div className="absolute right-0 top-px flex w-[33px] flex-col items-center rounded-sm bg-white pb-2 pr-0.5 pt-2">
      <ViewTool name="动态观察" className="h-[30px]">
        <circle cx="10" cy="10" r="9" stroke={D} />
        <path d="M14 2c3-1.500 6-1 5 2-1 4-7 8-12 9.500S-1 15 .8 10.500C1.500 9 3 7 5 5.500" stroke={B} />
      </ViewTool>
      <ViewTool name="二维" className="h-7">
        <rect x="1" y="1" width="18" height="18" rx="1" stroke={D} />
        <text x="3" y="16" fontSize="8" fontWeight="700" fill={B} fontFamily="'Noto Sans', sans-serif">2D</text>
      </ViewTool>
      <ViewTool name="俯视" className="h-[27px]">
        <path d="M1 5h13v14H1zM14 5l5-4v14l-5 4" stroke={D} />
        <path d="M1 5l5-4h13l-5 4z" fill={F} stroke={B} />
      </ViewTool>
      <button type="button" aria-label="视图方向" className="flex h-2.5 items-center"><Caret className="mt-0.5 text-[#4d5669]" /></button>
      <ViewTool name="着色" className="h-[29px]">
        <path d="M1 5h13v14H1zM1 5l5-4h13l-5 4M14 19l5-4V1" fill={F} stroke={B} />
      </ViewTool>
      <button type="button" aria-label="显示样式" className="flex h-2.5 items-center"><Caret className="mt-0.5 text-[#4d5669]" /></button>
      <ViewTool name="全屏" className="h-[29px]">
        <path d="M1 7V1h6M13 1h6v6M19 13v6h-6M7 19H1v-6" stroke={D} />
      </ViewTool>
      <ViewTool name="选择显示" className="h-[29px]">
        <rect x="1" y="1" width="18" height="18" stroke={D} strokeDasharray="2.500 1.500" />
        <path d="M10 4l5 3v6l-5 3-5-3V7zM5 7l5 3 5-3M10 10v6" stroke={B} />
      </ViewTool>
      <div className="my-0.5 h-px w-6 bg-[#555]" />
      <ViewTool name="显示设置" className="h-8">
        <path d="M10 19H1V1h18v10M4 6h2M8 6h8M4 10h8M4 14h3" stroke={D} />
        <path d="M11 16c2-3.500 6-3.500 8.500 0-2.500 3.500-6.500 3.500-8.500 0z" stroke={B} />
        <circle cx="15" cy="16" r="1.200" fill={B} />
      </ViewTool>
    </div>
  );
}

export default function App() {
  return (
    <div className="flex h-screen flex-col overflow-hidden bg-white text-[12px] leading-4 text-[#1f1f1f] [font-family:'Noto_Sans','Noto_Sans_CJK_SC',sans-serif]">
      <TopBar />
      <Ribbon />
      <ContextBar />
      <main className="flex min-h-0 flex-1">
        <Navigator />
        <div className="ml-1 flex w-[456px] shrink-0 flex-col">
          <ComponentPanel />
          <PropertyPanel />
        </div>
        <div className="relative ml-1 min-w-0 flex-1 bg-black">
          <Scene />
          <RebarPanel />
          <ViewBar />
          <button type="button" aria-label="收起侧栏" className="absolute left-0 top-[365px] h-[62px] w-4">
            <svg viewBox="0 0 16 62" className="h-full w-full">
              <path d="M0 0l14 4q2 1 2 3v48q0 2-2 3L0 62z" fill="#4f4f4f" />
              <path d="M9.500 27.500L5 31.500l4.500 4" stroke="#aaa" fill="none" />
            </svg>
          </button>
        </div>
      </main>
    </div>
  );
}
